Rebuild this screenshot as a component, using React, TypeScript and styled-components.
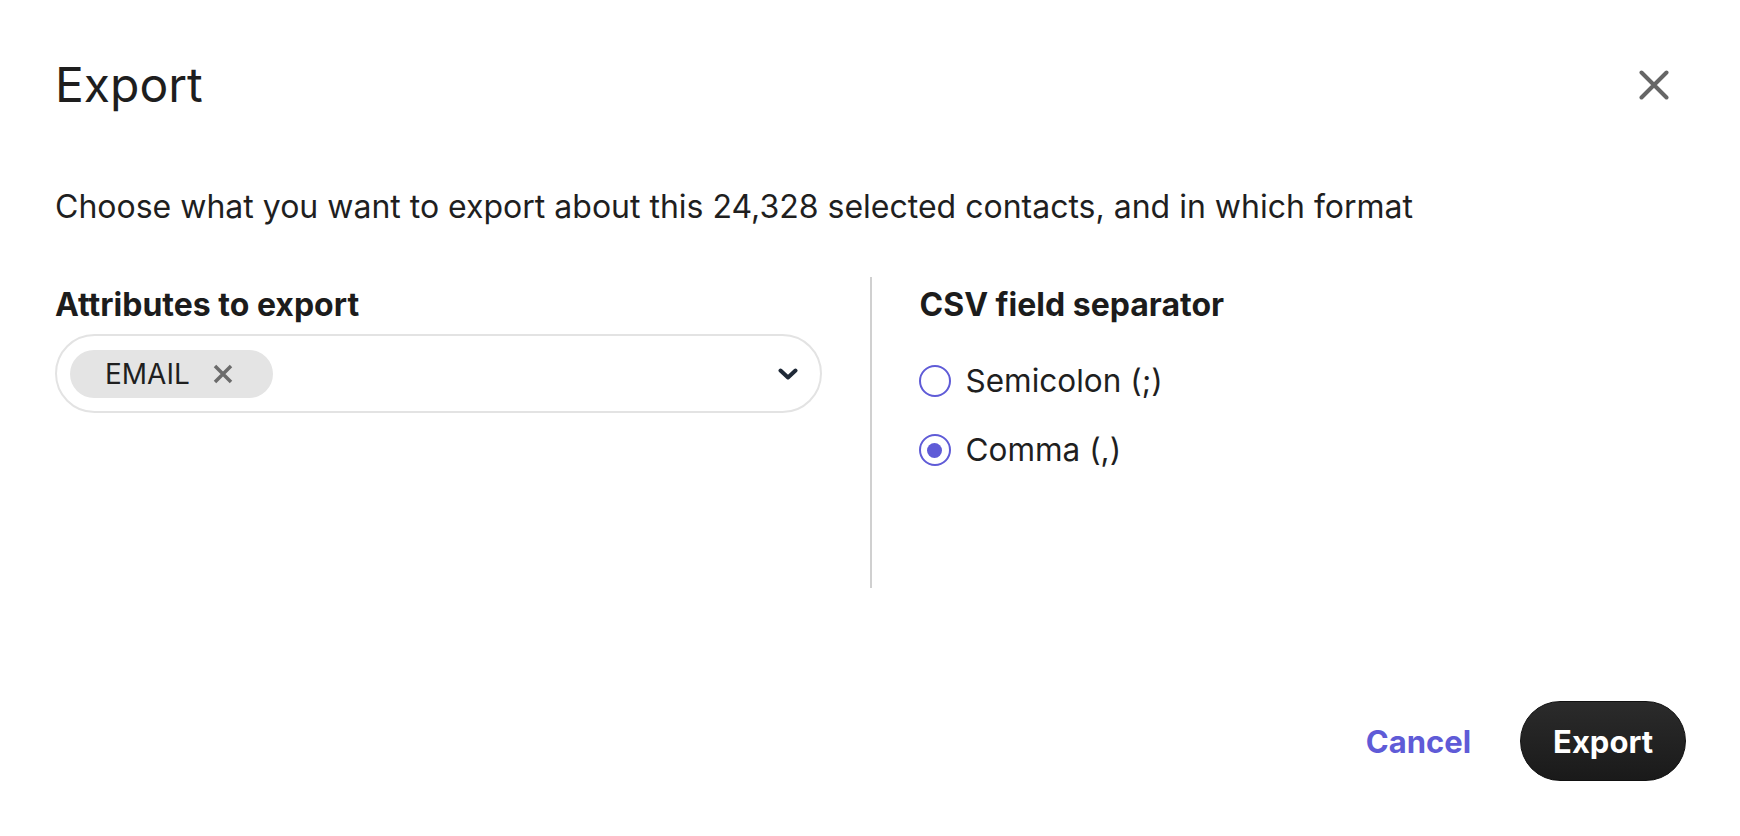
import React, { useState } from 'react';
import styled, { createGlobalStyle } from 'styled-components';

const GlobalStyle = createGlobalStyle`
  html, body {
    margin: 0;
    padding: 0;
    background: #ffffff;
  }
  body {
    font-family: Inter, "Noto Sans", "Liberation Sans", sans-serif;
    color: #1f1f1f;
  }
  * {
    box-sizing: border-box;
  }
`;

const Dialog = styled.div`
  display: flex;
  flex-direction: column;
  height: 100vh;
  padding: 56px 54px 55px 55px;
`;

const Header = styled.div`
  display: flex;
  align-items: flex-start;
  justify-content: space-between;
`;

const Title = styled.h1`
  margin: 0;
  font-size: 48px;
  line-height: 1.2;
  font-weight: 400;
  color: #1e1e1e;
`;

const CloseButton = styled.button`
  display: flex;
  align-items: center;
  justify-content: center;
  width: 64px;
  height: 58px;
  padding: 0;
  border: none;
  background: transparent;
  color: #666666;
  cursor: pointer;
`;

const Description = styled.p`
  margin: 73px 0 0;
  font-size: 32px;
  line-height: normal;
  font-weight: 400;
  color: #1f1f1f;
`;

const Columns = styled.div`
  display: grid;
  grid-template-columns: 1fr auto 1fr;
  column-gap: 48px;
  min-height: 311px;
  margin-top: 51px;
`;

const Column = styled.div`
  display: flex;
  flex-direction: column;
  padding-top: 8px;
`;

const Divider = styled.div`
  width: 2px;
  background: #d0d0d0;
`;

const Label = styled.div`
  font-size: 32px;
  line-height: normal;
  font-weight: 700;
  color: #1c1c1c;
`;

const SelectBox = styled.div`
  display: flex;
  align-items: center;
  justify-content: space-between;
  height: 79px;
  margin-top: 10px;
  padding: 0 22px 0 13px;
  border: 2px solid #e3e3e3;
  border-radius: 40px;
  background: #ffffff;
`;

const Chip = styled.div`
  display: flex;
  align-items: center;
  gap: 23px;
  height: 48px;
  padding: 0 40px 0 35px;
  border-radius: 24px;
  background: #e4e4e4;
  font-size: 28px;
  color: #1f1f1f;
`;

const ChipRemove = styled.span`
  display: flex;
  color: #6b6b6b;
`;

const Chevron = styled.span`
  display: flex;
  color: #1f2937;
`;

const RadioList = styled.div`
  display: flex;
  flex-direction: column;
  gap: 30px;
  margin-top: 38px;
`;

const RadioRow = styled.label`
  display: flex;
  align-items: center;
  gap: 15px;
  font-size: 31.5px;
  line-height: 38.7px;
  color: #1f1f1f;
  cursor: pointer;
`;

const RadioCircle = styled.span<{ $checked: boolean }>`
  display: flex;
  align-items: center;
  justify-content: center;
  width: 32px;
  height: 32px;
  margin-left: -1px;
  border: 2px solid #5f5bd7;
  border-radius: 50%;
  background: #ffffff;

  &::after {
    content: '';
    width: 15px;
    height: 15px;
    border-radius: 50%;
    background: ${(p) => (p.$checked ? '#5f5bd7' : 'transparent')};
  }
`;

const Footer = styled.div`
  display: flex;
  align-items: center;
  justify-content: flex-end;
  gap: 49px;
  margin-top: auto;
`;

const CancelButton = styled.button`
  padding: 0;
  border: none;
  background: transparent;
  font-family: inherit;
  font-size: 31px;
  font-weight: 700;
  color: #5f5bd7;
  cursor: pointer;
`;

const PrimaryButton = styled.button`
  height: 80px;
  padding: 0 32px;
  border: 1px solid #111111;
  border-radius: 40px;
  background: linear-gradient(180deg, #2b2b2b 0%, #1a1a1a 100%);
  font-family: inherit;
  font-size: 31px;
  font-weight: 700;
  color: #ffffff;
  cursor: pointer;
`;

const separators = [
  { id: 'semicolon', label: 'Semicolon (;)' },
  { id: 'comma', label: 'Comma (,)' },
];

const App: React.FC = () => {
  const [separator, setSeparator] = useState('comma');

  return (
    <>
      <GlobalStyle />
      <Dialog>
        <Header>
          <Title>Export</Title>
          <CloseButton aria-label="Close">
            <svg width="30" height="30" viewBox="0 0 30 30" fill="none">
              <path d="M2.5 2.5L27.5 27.5M27.5 2.5L2.5 27.5" stroke="currentColor" strokeWidth="4" strokeLinecap="round" />
            </svg>
          </CloseButton>
        </Header>

        <Description>
          Choose what you want to export about this 24,328 selected contacts, and in which format
        </Description>

        <Columns>
          <Column>
            <Label>Attributes to export</Label>
            <SelectBox>
              <Chip>
                EMAIL
                <ChipRemove>
                  <svg width="20" height="20" viewBox="0 0 20 20" fill="none">
                    <path d="M2 2L18 18M18 2L2 18" stroke="currentColor" strokeWidth="3.5" />
                  </svg>
                </ChipRemove>
              </Chip>
              <Chevron>
                <svg width="20" height="12" viewBox="0 0 20 12" fill="none">
                  <path d="M2.5 2.5L10 9.5L17.5 2.5" stroke="currentColor" strokeWidth="4" strokeLinecap="round" strokeLinejoin="round" />
                </svg>
              </Chevron>
            </SelectBox>
          </Column>

          <Divider />

          <Column>
            <Label>CSV field separator</Label>
            <RadioList>
              {separators.map((s) => (
                <RadioRow key={s.id} onClick={() => setSeparator(s.id)}>
                  <RadioCircle $checked={separator === s.id} />
                  {s.label}
                </RadioRow>
              ))}
            </RadioList>
          </Column>
        </Columns>

        <Footer>
          <CancelButton>Cancel</CancelButton>
          <PrimaryButton>Export</PrimaryButton>
        </Footer>
      </Dialog>
    </>
  );
};

export default App;
